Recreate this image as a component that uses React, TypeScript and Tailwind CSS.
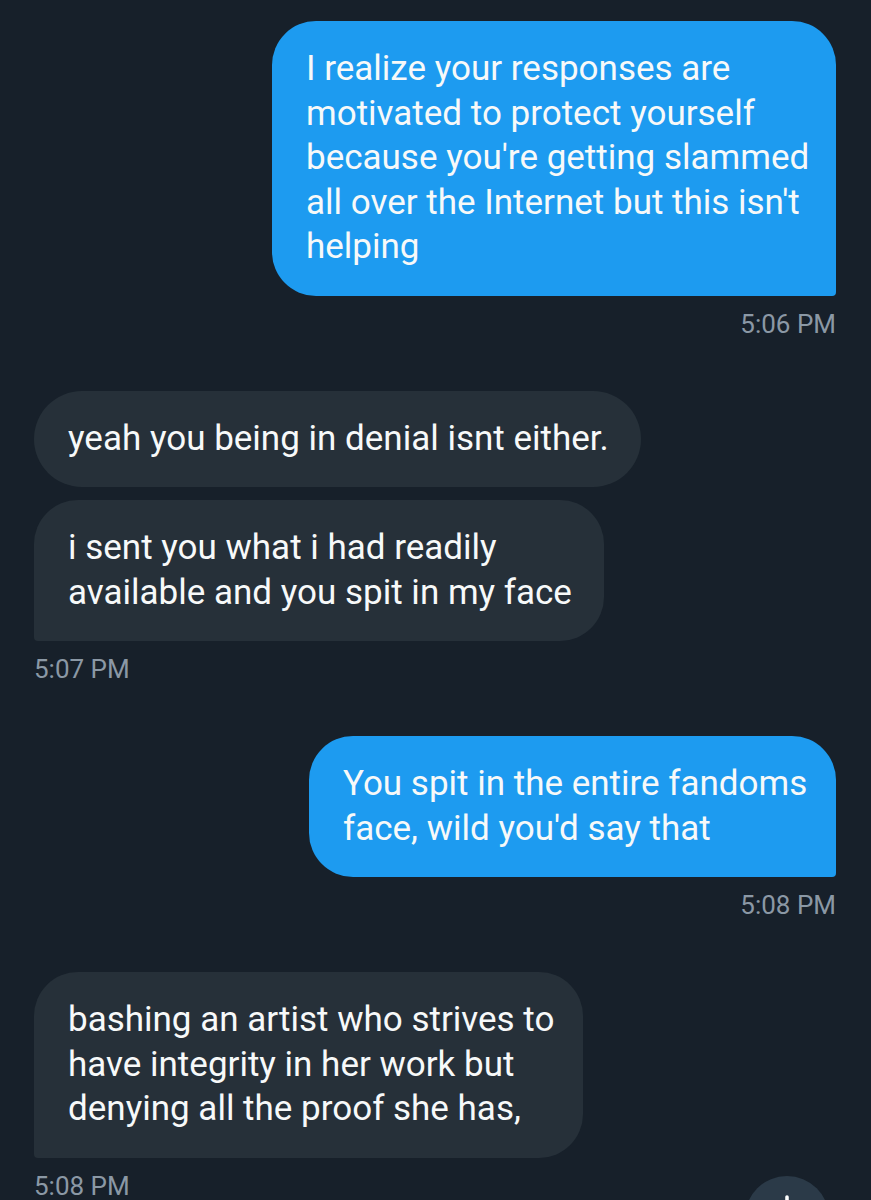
import { ArrowDown } from "lucide-react";

type Msg = { mine: boolean; lines: string[]; last: boolean; time?: string; width: string };

const messages: Msg[] = [
    {
        mine: true,
        lines: ["I realize your responses are", "motivated to protect yourself", "because you're getting slammed", "all over the Internet but this isn't", "helping"],
        last: true,
        time: "5:06 PM",
        width: "w-[564px]",
    },
    { mine: false, lines: ["yeah you being in denial isnt either."], last: false, width: "w-[607px]" },
    {
        mine: false,
        lines: ["i sent you what i had readily", "available and you spit in my face"],
        last: true,
        time: "5:07 PM",
        width: "w-[570px]",
    },
    {
        mine: true,
        lines: ["You spit in the entire fandoms", "face, wild you'd say that"],
        last: true,
        time: "5:08 PM",
        width: "w-[527px]",
    },
    {
        mine: false,
        lines: ["bashing an artist who strives to", "have integrity in her work but", "denying all the proof she has,"],
        last: true,
        time: "5:08 PM",
        width: "w-[549px]",
    },
];

const Bubble = ({ m }: { m: Msg }) => {
    const shape = m.mine
        ? "rounded-[44px] rounded-br-[4px] bg-[#1d9bf0]"
        : m.last
            ? "rounded-[44px] rounded-bl-[4px] bg-[#263039]"
            : "rounded-[48px] bg-[#263039]";
    return (
        <div className={`flex flex-col ${m.mine ? "items-end" : "items-start"} ${m.last ? "mb-[52px]" : "mb-[13px]"}`}>
            <div className={`${shape} ${m.width} px-[34px] py-[26px] text-[35px] leading-[44.5px] text-[#f7f9f9]`}>
                {m.lines.map((l, i) => (
                    <div key={i} className="whitespace-nowrap">{l}</div>
                ))}
            </div>
            {m.time && (
                <p className="mt-[13px] text-[26px] leading-[30px] text-[#8b98a5]">{m.time}</p>
            )}
        </div>
    );
};

const App = () => {
    return (
        <div className="relative h-[1200px] w-[871px] overflow-hidden bg-[#17202a] pl-[34px] pr-[35px] pt-[21px] font-['Roboto',sans-serif]">
            {messages.map((m, i) => (
                <Bubble key={i} m={m} />
            ))}

            <button
                className="absolute left-[745px] top-[1176px] flex h-[84px] w-[84px] justify-center rounded-full bg-[#2b3a48] pt-[14px]"
                aria-label="Scroll to bottom"
            >
                <ArrowDown className="h-[34px] w-[34px] text-white" strokeWidth={2.5} />
            </button>
        </div>
    );
};

export default App;
